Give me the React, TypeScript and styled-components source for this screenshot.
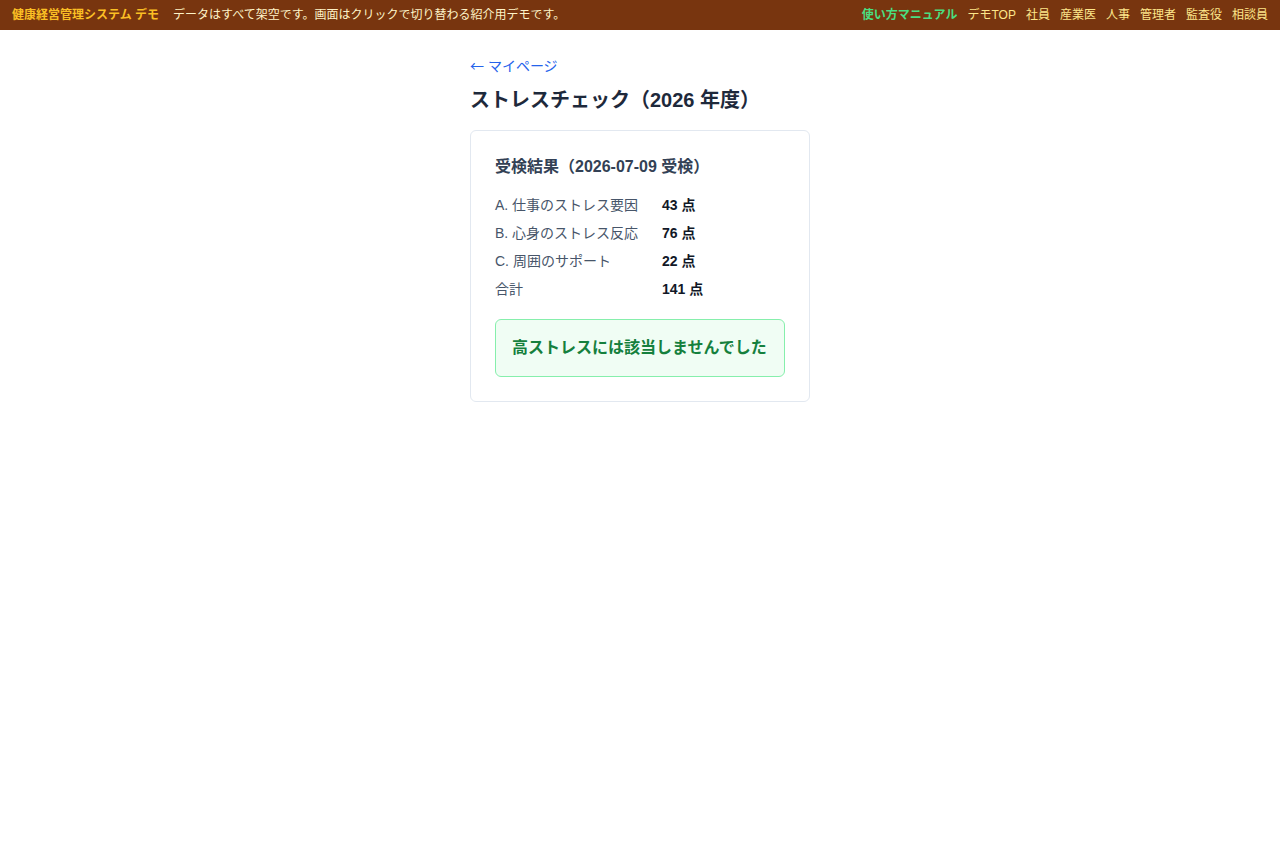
import React from "react"
import styled, { createGlobalStyle } from "styled-components"

const GlobalStyle = createGlobalStyle`
  html, body {
    margin: 0;
    padding: 0;
    background: #ffffff;
    font-family: "Liberation Sans", "Noto Sans CJK JP", sans-serif;
    color: #1e293b;
  }
  * {
    box-sizing: border-box;
  }
`

interface ScoreRow {
  label: string
  value: string
}

const scores: ScoreRow[] = [
  { label: "A. 仕事のストレス要因", value: "43 点" },
  { label: "B. 心身のストレス反応", value: "76 点" },
  { label: "C. 周囲のサポート", value: "22 点" },
  { label: "合計", value: "141 点" },
]

const navLinks = ["デモTOP", "社員", "産業医", "人事", "管理者", "監査役", "相談員"]

export default function App() {
  return (
    <>
      <GlobalStyle />
      <DemoBar>
        <BarLeft>
          <BarTitle>健康経営管理システム デモ</BarTitle>
          <BarNote>データはすべて架空です。画面はクリックで切り替わる紹介用デモです。</BarNote>
        </BarLeft>
        <BarNav>
          <NavLink manual>使い方マニュアル</NavLink>
          {navLinks.map(link => (
            <NavLink key={link}>{link}</NavLink>
          ))}
        </BarNav>
      </DemoBar>

      <Main>
        <BackLink href="#">
          <Arrow>←</Arrow> マイページ
        </BackLink>
        <PageTitle>ストレスチェック（2026 年度）</PageTitle>

        <Card>
          <CardTitle>受検結果（2026-07-09 受検）</CardTitle>
          <ScoreGrid>
            {scores.map(row => (
              <React.Fragment key={row.label}>
                <ScoreLabel>{row.label}</ScoreLabel>
                <ScoreValue>{row.value}</ScoreValue>
              </React.Fragment>
            ))}
          </ScoreGrid>
          <ResultBox>高ストレスには該当しませんでした</ResultBox>
        </Card>
      </Main>
    </>
  )
}

const DemoBar = styled.header`
  height: 30px;
  background: #78350f;
  display: flex;
  align-items: center;
  justify-content: space-between;
  padding: 0 12px;
  font-size: 12px;
  line-height: 16px;
`

const BarLeft = styled.div`
  display: flex;
  align-items: center;
  gap: 14px;
`

const BarTitle = styled.span`
  color: #fbbf24;
  font-weight: bold;
`

const BarNote = styled.span`
  color: #fef3c7;
`

const BarNav = styled.nav`
  display: flex;
  align-items: center;
  gap: 10px;
`

const NavLink = styled.a<{ manual?: boolean }>`
  color: ${props => (props.manual ? "#4ade80" : "#fde68a")};
  font-weight: ${props => (props.manual ? "bold" : "normal")};
  text-decoration: none;
  cursor: pointer;
`

const Main = styled.main`
  width: 340px;
  margin: 0 auto;
  padding-top: 26px;
`

const BackLink = styled.a`
  display: block;
  height: 20px;
  font-size: 14px;
  line-height: 20px;
  color: #2563eb;
  text-decoration: none;
`

const Arrow = styled.span`
  font-family: "Noto Sans CJK JP", sans-serif;
  font-size: 14px;
  line-height: 1;
`

const PageTitle = styled.h1`
  margin: 10px 0 16px;
  font-size: 20px;
  line-height: 28px;
  font-weight: bold;
  color: #1e293b;
`

const Card = styled.section`
  border: 1px solid #e2e8f0;
  border-radius: 6px;
  padding: 24px;
  background: #ffffff;
`

const CardTitle = styled.h2`
  margin: 0 0 11px;
  font-size: 16px;
  line-height: 24px;
  font-weight: bold;
  color: #334155;
`

const ScoreGrid = styled.div`
  display: grid;
  grid-template-columns: 167px auto;
  grid-auto-rows: 28px;
  align-items: center;
  font-size: 14px;
  margin-bottom: 17px;
`

const ScoreLabel = styled.div`
  color: #475569;
`

const ScoreValue = styled.div`
  color: #111827;
  font-weight: bold;
`

const ResultBox = styled.div`
  padding: 16px;
  border: 1px solid #86efac;
  border-radius: 6px;
  background: #f0fdf4;
  color: #15803d;
  font-size: 16px;
  line-height: 24px;
  font-weight: bold;
`
